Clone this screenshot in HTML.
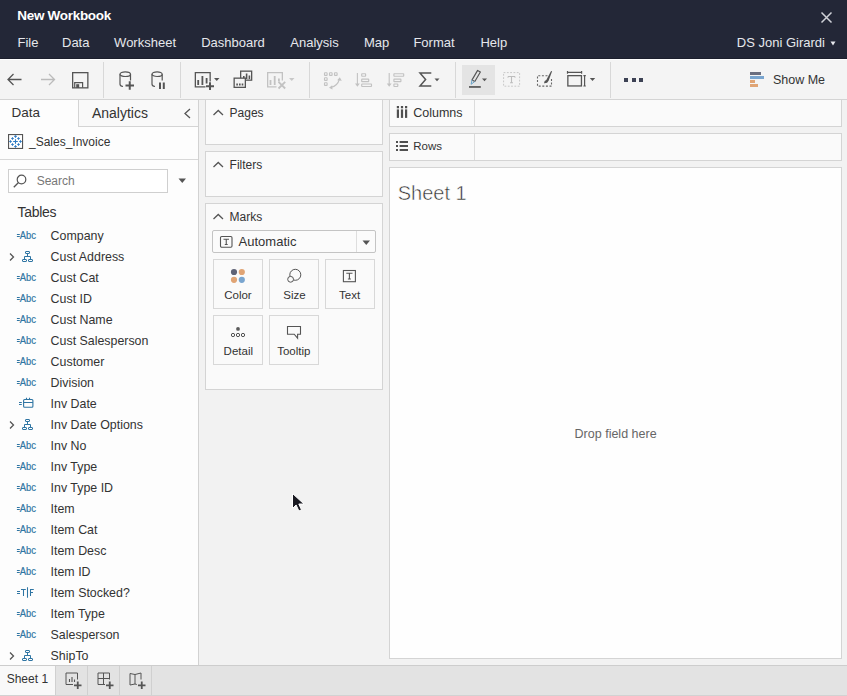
<!DOCTYPE html>
<html><head><meta charset="utf-8"><style>
html,body{margin:0;padding:0;width:847px;height:696px;overflow:hidden;background:#f2f2f2;position:relative}
body{font-family:"Liberation Sans",sans-serif}
.t{position:absolute;line-height:1;white-space:nowrap}
svg{overflow:visible}
</style></head><body>
<div style="position:absolute;left:0px;top:0px;width:847px;height:58px;background:#232737"></div>
<div style="position:absolute;left:0px;top:58px;width:847px;height:1px;background:#1c1f2d"></div>
<div style="position:absolute;left:0px;top:59px;width:847px;height:1px;background:#ffffff"></div>
<div class="t" style="left:17.3px;top:9.07px;font-size:13.5px;color:#ffffff;font-weight:bold;letter-spacing:-0.3px">New Workbook</div>
<svg style="position:absolute;left:819px;top:10px" width="15" height="15" viewBox="0 0 15 15"><path d="M2.5 2.5L12.5 12.5M12.5 2.5L2.5 12.5" stroke="#d0d2d8" stroke-width="1.5" fill="none"/></svg>
<div class="t" style="left:17.5px;top:35.70px;font-size:13px;color:#e6e7ec;font-weight:normal;">File</div>
<div class="t" style="left:62.0px;top:35.70px;font-size:13px;color:#e6e7ec;font-weight:normal;">Data</div>
<div class="t" style="left:114.1px;top:35.70px;font-size:13px;color:#e6e7ec;font-weight:normal;">Worksheet</div>
<div class="t" style="left:201.2px;top:35.70px;font-size:13px;color:#e6e7ec;font-weight:normal;">Dashboard</div>
<div class="t" style="left:290.3px;top:35.70px;font-size:13px;color:#e6e7ec;font-weight:normal;">Analysis</div>
<div class="t" style="left:363.9px;top:35.70px;font-size:13px;color:#e6e7ec;font-weight:normal;">Map</div>
<div class="t" style="left:413.4px;top:35.70px;font-size:13px;color:#e6e7ec;font-weight:normal;">Format</div>
<div class="t" style="left:480.4px;top:35.70px;font-size:13px;color:#e6e7ec;font-weight:normal;">Help</div>
<div class="t" style="left:736.8px;top:35.80px;font-size:13px;color:#e6e7ec;font-weight:normal;">DS Joni Girardi</div>
<svg style="position:absolute;left:830px;top:41px" width="6" height="5" viewBox="0 0 6 5"><path d="M0.5 0.5H5.5L3 4.5Z" fill="#e6e7ec"/></svg>
<div style="position:absolute;left:0px;top:60px;width:847px;height:39px;background:#f4f4f4"></div>
<div style="position:absolute;left:0px;top:99px;width:847px;height:1px;background:#d4d4d4"></div>
<div style="position:absolute;left:103px;top:62px;width:1px;height:36px;background:#d8d8d8"></div>
<div style="position:absolute;left:180px;top:62px;width:1px;height:36px;background:#d8d8d8"></div>
<div style="position:absolute;left:309px;top:62px;width:1px;height:36px;background:#d8d8d8"></div>
<div style="position:absolute;left:455px;top:62px;width:1px;height:36px;background:#d8d8d8"></div>
<div style="position:absolute;left:610px;top:62px;width:1px;height:36px;background:#d8d8d8"></div>
<svg style="position:absolute;left:6px;top:72px" width="18" height="15" viewBox="0 0 18 15"><path d="M15.5 7.5H2M7.5 2L2 7.5L7.5 13" stroke="#555" stroke-width="1.3" fill="none"/></svg>
<svg style="position:absolute;left:39px;top:72px" width="18" height="15" viewBox="0 0 18 15"><path d="M2 7.5H15.5M10 2L15.5 7.5L10 13" stroke="#bbb" stroke-width="1.3" fill="none"/></svg>
<svg style="position:absolute;left:72px;top:72px" width="17" height="17" viewBox="0 0 17 17"><rect x="0.65" y="0.65" width="15.2" height="15.2" fill="none" stroke="#555" stroke-width="1.3"/><path d="M2.7 15.8V10.6H10.6V15.8" fill="none" stroke="#555" stroke-width="1.2"/><rect x="4.2" y="12.2" width="3" height="3.8" fill="#555"/></svg>
<svg style="position:absolute;left:118.8px;top:71.3px" width="17" height="20" viewBox="0 0 17 20"><path d="M1 3.2V13.2Q1 15 4 15.5" fill="none" stroke="#555" stroke-width="1.2"/><path d="M11.5 3.2V9.5" fill="none" stroke="#555" stroke-width="1.2"/><ellipse cx="6.25" cy="3.2" rx="5.25" ry="2.3" fill="none" stroke="#555" stroke-width="1.2"/><path d="M6.5 14.5H15M10.75 10.2V18.7" stroke="#555" stroke-width="2"/></svg>
<svg style="position:absolute;left:150.6px;top:71.3px" width="16" height="20" viewBox="0 0 16 20"><path d="M1 3.2V13.2Q1 15 4 15.5" fill="none" stroke="#555" stroke-width="1.2"/><path d="M11.2 3.2V9.5" fill="none" stroke="#555" stroke-width="1.2"/><ellipse cx="6.1" cy="3.2" rx="5.1" ry="2.3" fill="none" stroke="#555" stroke-width="1.2"/><path d="M9 11.5V18M12.8 11.5V18" stroke="#555" stroke-width="2"/></svg>
<svg style="position:absolute;left:194px;top:71px" width="27" height="20" viewBox="0 0 27 20"><path d="M11.5 15.85H1.35V1.65H16.15V10.5" fill="none" stroke="#555" stroke-width="1.3"/><g fill="#555"><rect x="3.3" y="9" width="1.8" height="5"/><rect x="7.5" y="5" width="1.8" height="9"/><rect x="11.7" y="7" width="1.8" height="5.5"/></g><path d="M12 15.3H20M16 11.3V19" stroke="#555" stroke-width="2"/><path d="M20 7H25.5L22.75 10Z" fill="#555"/></svg>
<svg style="position:absolute;left:233px;top:70px" width="20" height="19" viewBox="0 0 20 19"><rect x="7.65" y="1.15" width="11" height="9" fill="#f4f4f4" stroke="#555" stroke-width="1.3"/><g fill="#555"><rect x="10" y="6" width="1.6" height="3"/><rect x="12.8" y="3.5" width="1.6" height="5.5"/><rect x="15.6" y="5.5" width="1.6" height="3.5"/></g><rect x="1.15" y="8.15" width="11.2" height="9.2" fill="#f4f4f4" stroke="#555" stroke-width="1.3"/><g fill="#555"><rect x="3.3" y="13.5" width="1.6" height="2"/><rect x="6" y="13.5" width="1.6" height="2"/><rect x="8.7" y="13.5" width="1.6" height="2"/></g></svg>
<svg style="position:absolute;left:266px;top:71px" width="30" height="20" viewBox="0 0 30 20"><path d="M10.5 15.85H1.65V1.65H16.35V9.5" fill="none" stroke="#c2c2c2" stroke-width="1.3"/><g fill="#c2c2c2"><rect x="3.6" y="9" width="1.8" height="5"/><rect x="7.8" y="5" width="1.8" height="9"/><rect x="12" y="7.5" width="1.8" height="3"/></g><path d="M12.5 10.8L19.2 17.5M19.2 10.8L12.5 17.5" stroke="#c2c2c2" stroke-width="1.8"/><path d="M23 7H28.5L25.75 10Z" fill="#c8c8c8"/></svg>
<svg style="position:absolute;left:322px;top:71px" width="21" height="19" viewBox="0 0 21 19"><g fill="none" stroke="#c2c2c2" stroke-width="1.1"><rect x="2.5" y="1.8" width="2.6" height="2.6" rx="0.5"/><rect x="7.5" y="1.8" width="2.6" height="2.6" rx="0.5"/><rect x="12.5" y="1.8" width="2.6" height="2.6" rx="0.5"/><rect x="2.5" y="6.8" width="2.6" height="2.6" rx="0.5"/><rect x="2.5" y="11.8" width="2.6" height="2.6" rx="0.5"/><path d="M9 16.3Q15.5 15 17.3 8.5"/></g><path d="M15.2 9.2L17.8 6.3L19.8 9.8Z M10.2 14.3L7 16.8L10.5 18.4Z" fill="#c2c2c2"/></svg>
<svg style="position:absolute;left:353px;top:71px" width="20" height="19" viewBox="0 0 20 19"><path d="M4.4 2V13" stroke="#c2c2c2" stroke-width="1.1"/><path d="M2 12.5H6.8L4.4 15.8Z" fill="#c2c2c2"/><g fill="none" stroke="#c2c2c2" stroke-width="1.15"><rect x="8.7" y="2.7" width="3.9" height="2.5" rx="0.4"/><rect x="8.7" y="8.1" width="7" height="2.5" rx="0.4"/><rect x="8.7" y="13" width="9.8" height="2.5" rx="0.4"/></g></svg>
<svg style="position:absolute;left:386px;top:71px" width="20" height="19" viewBox="0 0 20 19"><path d="M3.2 2V13" stroke="#c2c2c2" stroke-width="1.1"/><path d="M0.8 12.5H5.6L3.2 15.8Z" fill="#c2c2c2"/><g fill="none" stroke="#c2c2c2" stroke-width="1.15"><rect x="7.9" y="2.7" width="9.8" height="2.5" rx="0.4"/><rect x="7.9" y="8.1" width="7" height="2.5" rx="0.4"/><rect x="7.9" y="13" width="3.9" height="2.5" rx="0.4"/></g></svg>
<svg style="position:absolute;left:418px;top:71px" width="24" height="17" viewBox="0 0 24 17"><path d="M13.3 2H2L7.6 8.4L2 15H13.3" fill="none" stroke="#555" stroke-width="1.5" stroke-linejoin="miter"/><path d="M16.5 7.5H21.5L19 10.3Z" fill="#555"/></svg>
<div style="position:absolute;left:462px;top:65px;width:33px;height:30px;background:#e4e4e4"></div>
<svg style="position:absolute;left:466px;top:69px" width="24" height="20" viewBox="0 0 24 20"><path d="M11.62 1.39L14.38 3.01L8.81 12.5L6.05 10.88Z" fill="none" stroke="#555" stroke-width="1.15" stroke-linejoin="round"/><path d="M6.05 10.88L5.1 15.3L8.81 12.5" fill="none" stroke="#6aa3c8" stroke-width="1"/><rect x="3" y="17.1" width="11.8" height="1.7" fill="#555"/><path d="M16 9.5H21L18.5 12.2Z" fill="#555"/></svg>
<svg style="position:absolute;left:503px;top:72px" width="18" height="16" viewBox="0 0 18 16"><rect x="0.6" y="0.6" width="16" height="13.6" fill="none" stroke="#c8c8c8" stroke-width="1" stroke-dasharray="1.8 1.5"/><path d="M5 4.5H12M8.5 4.5V10.8M7 10.8H10" stroke="#bdbdbd" stroke-width="1.1" fill="none"/><path d="M5 4.5V5.8M12 4.5V5.8" stroke="#bdbdbd" stroke-width="0.9"/></svg>
<svg style="position:absolute;left:536px;top:69px" width="18" height="19" viewBox="0 0 18 19"><path d="M11.5 6.7H1.5V17.1H15.5V9.5" fill="none" stroke="#666" stroke-width="1.1" stroke-dasharray="2 1.6"/><path d="M8 14.2Q8.2 11.5 10.3 11L14.8 2.6Q15.6 1.5 16.1 2.3L12.6 11.7Q11.5 14.5 8 14.2Z" fill="#555"/></svg>
<svg style="position:absolute;left:566px;top:69px" width="31" height="20" viewBox="0 0 31 20"><rect x="1.85" y="6.65" width="13.6" height="10.3" fill="none" stroke="#555" stroke-width="1.3"/><path d="M1.5 3.4H15.6M1.5 2V4.8M15.6 2V4.8" stroke="#555" stroke-width="1.2" fill="none"/><path d="M18.6 6V17.6M17.4 6.6H19.8M17.4 17H19.8" stroke="#555" stroke-width="1.2" fill="none"/><path d="M23.8 9H29.2L26.5 11.9Z" fill="#555"/></svg>
<div style="position:absolute;left:624px;top:78px;width:4px;height:4px;background:#3d4254"></div>
<div style="position:absolute;left:631.5px;top:78px;width:4px;height:4px;background:#3d4254"></div>
<div style="position:absolute;left:639px;top:78px;width:4px;height:4px;background:#3d4254"></div>
<div style="position:absolute;left:750px;top:72px;width:11px;height:3px;background:#6b6f80"></div>
<div style="position:absolute;left:750px;top:76px;width:14px;height:3px;background:#79a5cf"></div>
<div style="position:absolute;left:750px;top:80px;width:5px;height:3px;background:#e0a474"></div>
<div style="position:absolute;left:750px;top:84px;width:8px;height:3px;background:#e0a474"></div>
<div class="t" style="left:772.9px;top:73.72px;font-size:12.5px;color:#333;font-weight:normal;">Show Me</div>
<div style="position:absolute;left:0px;top:100px;width:847px;height:565px;background:#f2f2f2"></div>
<div style="position:absolute;left:0px;top:100px;width:198px;height:565px;background:#fdfdfd"></div>
<div style="position:absolute;left:198px;top:100px;width:1px;height:565px;background:#d2d2d2"></div>
<div style="position:absolute;left:78px;top:100px;width:120px;height:26px;background:#f9f9f9;border-left:1px solid #d4d4d4;border-bottom:1px solid #d4d4d4;box-sizing:border-box;width:120px;height:27px"></div>
<div class="t" style="left:11.5px;top:106.17px;font-size:13.5px;color:#333;font-weight:normal;">Data</div>
<div class="t" style="left:91.9px;top:106.15px;font-size:14px;color:#333;font-weight:normal;">Analytics</div>
<svg style="position:absolute;left:183px;top:108px" width="9" height="11" viewBox="0 0 9 11"><path d="M7 1L2 5.5L7 10" fill="none" stroke="#555" stroke-width="1.3"/></svg>
<svg style="position:absolute;left:8px;top:134px" width="16" height="16" viewBox="0 0 16 16"><rect x="0.55" y="0.55" width="14" height="13.9" fill="#fff" stroke="#555" stroke-width="1.1"/><g stroke="#2e7bc4" stroke-width="1.1"><path d="M6.25 2.40H8.75M7.50 1.15V3.65"/><path d="M6.25 12.50H8.75M7.50 11.25V13.75"/><path d="M1.25 7.50H3.75M2.50 6.25V8.75"/><path d="M11.25 7.50H13.75M12.50 6.25V8.75"/><path d="M3.25 4.50H5.75M4.50 3.25V5.75"/><path d="M9.25 4.50H11.75M10.50 3.25V5.75"/><path d="M3.25 10.50H5.75M4.50 9.25V11.75"/><path d="M9.25 10.50H11.75M10.50 9.25V11.75"/><path d="M5.2 7.5H9.8M7.5 5.2V9.8"/></g></svg>
<div class="t" style="left:29.0px;top:135.64px;font-size:12px;color:#333;font-weight:normal;">_Sales_Invoice</div>
<div style="position:absolute;left:0px;top:159px;width:198px;height:1px;background:#d8d8d8"></div>
<div style="position:absolute;left:8px;top:169px;width:160px;height:24px;background:#fff;border:1px solid #cfcfcf;box-sizing:border-box"></div>
<svg style="position:absolute;left:12px;top:174px" width="16" height="15" viewBox="0 0 16 15"><circle cx="9.5" cy="5.5" r="4.3" fill="none" stroke="#555" stroke-width="1.2"/><path d="M6.5 8.5L1.8 13.2" stroke="#555" stroke-width="1.3"/></svg>
<div class="t" style="left:36.7px;top:175.34px;font-size:12px;color:#777;font-weight:normal;">Search</div>
<svg style="position:absolute;left:178px;top:178px" width="9" height="6" viewBox="0 0 9 6"><path d="M0.5 0.5H8L4.25 5Z" fill="#555"/></svg>
<div class="t" style="left:17.4px;top:205.15px;font-size:14px;color:#333;font-weight:normal;letter-spacing:-0.25px">Tables</div>
<div class="t" style="left:50.6px;top:229.50px;font-size:12.4px;color:#333;font-weight:normal;">Company</div>
<svg style="position:absolute;left:16px;top:232px" width="22" height="9" viewBox="0 0 22 9"><path d="M0.9 2.5H3.8M0.9 4.5H3.8" stroke="#2f75a3" stroke-width="1"/><text x="3.8" y="7" font-family="Liberation Sans" font-size="10" font-weight="normal" fill="#2f75a3" stroke="#2f75a3" stroke-width="0.2" textLength="16.2" lengthAdjust="spacingAndGlyphs">Abc</text></svg>
<div class="t" style="left:50.6px;top:250.50px;font-size:12.4px;color:#333;font-weight:normal;">Cust Address</div>
<svg style="position:absolute;left:8px;top:252px" width="8" height="10" viewBox="0 0 8 10"><path d="M2 1.5L5.5 5L2 8.5" fill="none" stroke="#555" stroke-width="1.3"/></svg>
<svg style="position:absolute;left:21px;top:251px" width="13" height="13" viewBox="0 0 13 13"><g fill="none" stroke="#2f75a3" stroke-width="1"><rect x="4.5" y="0.5" width="4" height="2" rx="0.4"/><rect x="1.5" y="8.5" width="4" height="2" rx="0.4"/><rect x="7.5" y="8.5" width="4" height="2" rx="0.4"/><path d="M6.5 3V5.5M3.5 8V5.5H9.5V8"/></g></svg>
<div class="t" style="left:50.6px;top:271.50px;font-size:12.4px;color:#333;font-weight:normal;">Cust Cat</div>
<svg style="position:absolute;left:16px;top:274px" width="22" height="9" viewBox="0 0 22 9"><path d="M0.9 2.5H3.8M0.9 4.5H3.8" stroke="#2f75a3" stroke-width="1"/><text x="3.8" y="7" font-family="Liberation Sans" font-size="10" font-weight="normal" fill="#2f75a3" stroke="#2f75a3" stroke-width="0.2" textLength="16.2" lengthAdjust="spacingAndGlyphs">Abc</text></svg>
<div class="t" style="left:50.6px;top:292.50px;font-size:12.4px;color:#333;font-weight:normal;">Cust ID</div>
<svg style="position:absolute;left:16px;top:295px" width="22" height="9" viewBox="0 0 22 9"><path d="M0.9 2.5H3.8M0.9 4.5H3.8" stroke="#2f75a3" stroke-width="1"/><text x="3.8" y="7" font-family="Liberation Sans" font-size="10" font-weight="normal" fill="#2f75a3" stroke="#2f75a3" stroke-width="0.2" textLength="16.2" lengthAdjust="spacingAndGlyphs">Abc</text></svg>
<div class="t" style="left:50.6px;top:313.50px;font-size:12.4px;color:#333;font-weight:normal;">Cust Name</div>
<svg style="position:absolute;left:16px;top:316px" width="22" height="9" viewBox="0 0 22 9"><path d="M0.9 2.5H3.8M0.9 4.5H3.8" stroke="#2f75a3" stroke-width="1"/><text x="3.8" y="7" font-family="Liberation Sans" font-size="10" font-weight="normal" fill="#2f75a3" stroke="#2f75a3" stroke-width="0.2" textLength="16.2" lengthAdjust="spacingAndGlyphs">Abc</text></svg>
<div class="t" style="left:50.6px;top:334.50px;font-size:12.4px;color:#333;font-weight:normal;">Cust Salesperson</div>
<svg style="position:absolute;left:16px;top:337px" width="22" height="9" viewBox="0 0 22 9"><path d="M0.9 2.5H3.8M0.9 4.5H3.8" stroke="#2f75a3" stroke-width="1"/><text x="3.8" y="7" font-family="Liberation Sans" font-size="10" font-weight="normal" fill="#2f75a3" stroke="#2f75a3" stroke-width="0.2" textLength="16.2" lengthAdjust="spacingAndGlyphs">Abc</text></svg>
<div class="t" style="left:50.6px;top:355.50px;font-size:12.4px;color:#333;font-weight:normal;">Customer</div>
<svg style="position:absolute;left:16px;top:358px" width="22" height="9" viewBox="0 0 22 9"><path d="M0.9 2.5H3.8M0.9 4.5H3.8" stroke="#2f75a3" stroke-width="1"/><text x="3.8" y="7" font-family="Liberation Sans" font-size="10" font-weight="normal" fill="#2f75a3" stroke="#2f75a3" stroke-width="0.2" textLength="16.2" lengthAdjust="spacingAndGlyphs">Abc</text></svg>
<div class="t" style="left:50.6px;top:376.50px;font-size:12.4px;color:#333;font-weight:normal;">Division</div>
<svg style="position:absolute;left:16px;top:379px" width="22" height="9" viewBox="0 0 22 9"><path d="M0.9 2.5H3.8M0.9 4.5H3.8" stroke="#2f75a3" stroke-width="1"/><text x="3.8" y="7" font-family="Liberation Sans" font-size="10" font-weight="normal" fill="#2f75a3" stroke="#2f75a3" stroke-width="0.2" textLength="16.2" lengthAdjust="spacingAndGlyphs">Abc</text></svg>
<div class="t" style="left:50.6px;top:397.50px;font-size:12.4px;color:#333;font-weight:normal;">Inv Date</div>
<svg style="position:absolute;left:18px;top:397px" width="17" height="12" viewBox="0 0 17 12"><path d="M1 5.5H3.8M1 7.5H3.8" stroke="#2f75a3" stroke-width="1"/><rect x="5.6" y="2.5" width="9.3" height="7.8" rx="1" fill="none" stroke="#2f75a3" stroke-width="1.1"/><path d="M5.6 5.5H14.9M8.5 0.8V3M11.5 0.8V3" stroke="#2f75a3" stroke-width="1.1"/></svg>
<div class="t" style="left:50.6px;top:418.50px;font-size:12.4px;color:#333;font-weight:normal;">Inv Date Options</div>
<svg style="position:absolute;left:8px;top:420px" width="8" height="10" viewBox="0 0 8 10"><path d="M2 1.5L5.5 5L2 8.5" fill="none" stroke="#555" stroke-width="1.3"/></svg>
<svg style="position:absolute;left:21px;top:419px" width="13" height="13" viewBox="0 0 13 13"><g fill="none" stroke="#2f75a3" stroke-width="1"><rect x="4.5" y="0.5" width="4" height="2" rx="0.4"/><rect x="1.5" y="8.5" width="4" height="2" rx="0.4"/><rect x="7.5" y="8.5" width="4" height="2" rx="0.4"/><path d="M6.5 3V5.5M3.5 8V5.5H9.5V8"/></g></svg>
<div class="t" style="left:50.6px;top:439.50px;font-size:12.4px;color:#333;font-weight:normal;">Inv No</div>
<svg style="position:absolute;left:16px;top:442px" width="22" height="9" viewBox="0 0 22 9"><path d="M0.9 2.5H3.8M0.9 4.5H3.8" stroke="#2f75a3" stroke-width="1"/><text x="3.8" y="7" font-family="Liberation Sans" font-size="10" font-weight="normal" fill="#2f75a3" stroke="#2f75a3" stroke-width="0.2" textLength="16.2" lengthAdjust="spacingAndGlyphs">Abc</text></svg>
<div class="t" style="left:50.6px;top:460.50px;font-size:12.4px;color:#333;font-weight:normal;">Inv Type</div>
<svg style="position:absolute;left:16px;top:463px" width="22" height="9" viewBox="0 0 22 9"><path d="M0.9 2.5H3.8M0.9 4.5H3.8" stroke="#2f75a3" stroke-width="1"/><text x="3.8" y="7" font-family="Liberation Sans" font-size="10" font-weight="normal" fill="#2f75a3" stroke="#2f75a3" stroke-width="0.2" textLength="16.2" lengthAdjust="spacingAndGlyphs">Abc</text></svg>
<div class="t" style="left:50.6px;top:481.50px;font-size:12.4px;color:#333;font-weight:normal;">Inv Type ID</div>
<svg style="position:absolute;left:16px;top:484px" width="22" height="9" viewBox="0 0 22 9"><path d="M0.9 2.5H3.8M0.9 4.5H3.8" stroke="#2f75a3" stroke-width="1"/><text x="3.8" y="7" font-family="Liberation Sans" font-size="10" font-weight="normal" fill="#2f75a3" stroke="#2f75a3" stroke-width="0.2" textLength="16.2" lengthAdjust="spacingAndGlyphs">Abc</text></svg>
<div class="t" style="left:50.6px;top:502.50px;font-size:12.4px;color:#333;font-weight:normal;">Item</div>
<svg style="position:absolute;left:16px;top:505px" width="22" height="9" viewBox="0 0 22 9"><path d="M0.9 2.5H3.8M0.9 4.5H3.8" stroke="#2f75a3" stroke-width="1"/><text x="3.8" y="7" font-family="Liberation Sans" font-size="10" font-weight="normal" fill="#2f75a3" stroke="#2f75a3" stroke-width="0.2" textLength="16.2" lengthAdjust="spacingAndGlyphs">Abc</text></svg>
<div class="t" style="left:50.6px;top:523.50px;font-size:12.4px;color:#333;font-weight:normal;">Item Cat</div>
<svg style="position:absolute;left:16px;top:526px" width="22" height="9" viewBox="0 0 22 9"><path d="M0.9 2.5H3.8M0.9 4.5H3.8" stroke="#2f75a3" stroke-width="1"/><text x="3.8" y="7" font-family="Liberation Sans" font-size="10" font-weight="normal" fill="#2f75a3" stroke="#2f75a3" stroke-width="0.2" textLength="16.2" lengthAdjust="spacingAndGlyphs">Abc</text></svg>
<div class="t" style="left:50.6px;top:544.50px;font-size:12.4px;color:#333;font-weight:normal;">Item Desc</div>
<svg style="position:absolute;left:16px;top:547px" width="22" height="9" viewBox="0 0 22 9"><path d="M0.9 2.5H3.8M0.9 4.5H3.8" stroke="#2f75a3" stroke-width="1"/><text x="3.8" y="7" font-family="Liberation Sans" font-size="10" font-weight="normal" fill="#2f75a3" stroke="#2f75a3" stroke-width="0.2" textLength="16.2" lengthAdjust="spacingAndGlyphs">Abc</text></svg>
<div class="t" style="left:50.6px;top:565.50px;font-size:12.4px;color:#333;font-weight:normal;">Item ID</div>
<svg style="position:absolute;left:16px;top:568px" width="22" height="9" viewBox="0 0 22 9"><path d="M0.9 2.5H3.8M0.9 4.5H3.8" stroke="#2f75a3" stroke-width="1"/><text x="3.8" y="7" font-family="Liberation Sans" font-size="10" font-weight="normal" fill="#2f75a3" stroke="#2f75a3" stroke-width="0.2" textLength="16.2" lengthAdjust="spacingAndGlyphs">Abc</text></svg>
<div class="t" style="left:50.6px;top:586.50px;font-size:12.4px;color:#333;font-weight:normal;">Item Stocked?</div>
<svg style="position:absolute;left:16px;top:586px" width="20" height="13" viewBox="0 0 20 13"><path d="M1 5.5H4M1 7.5H4" stroke="#2f75a3" stroke-width="1"/><path d="M5 3.5H9.8M7.5 3.5V10M11.5 1.2V11.7M14.5 3V10M14.5 3.5H17.8M14.5 6.5H17" stroke="#2f75a3" stroke-width="1.05" fill="none"/></svg>
<div class="t" style="left:50.6px;top:607.50px;font-size:12.4px;color:#333;font-weight:normal;">Item Type</div>
<svg style="position:absolute;left:16px;top:610px" width="22" height="9" viewBox="0 0 22 9"><path d="M0.9 2.5H3.8M0.9 4.5H3.8" stroke="#2f75a3" stroke-width="1"/><text x="3.8" y="7" font-family="Liberation Sans" font-size="10" font-weight="normal" fill="#2f75a3" stroke="#2f75a3" stroke-width="0.2" textLength="16.2" lengthAdjust="spacingAndGlyphs">Abc</text></svg>
<div class="t" style="left:50.6px;top:628.50px;font-size:12.4px;color:#333;font-weight:normal;">Salesperson</div>
<svg style="position:absolute;left:16px;top:631px" width="22" height="9" viewBox="0 0 22 9"><path d="M0.9 2.5H3.8M0.9 4.5H3.8" stroke="#2f75a3" stroke-width="1"/><text x="3.8" y="7" font-family="Liberation Sans" font-size="10" font-weight="normal" fill="#2f75a3" stroke="#2f75a3" stroke-width="0.2" textLength="16.2" lengthAdjust="spacingAndGlyphs">Abc</text></svg>
<div class="t" style="left:50.6px;top:649.50px;font-size:12.4px;color:#333;font-weight:normal;">ShipTo</div>
<svg style="position:absolute;left:8px;top:651px" width="8" height="10" viewBox="0 0 8 10"><path d="M2 1.5L5.5 5L2 8.5" fill="none" stroke="#555" stroke-width="1.3"/></svg>
<svg style="position:absolute;left:21px;top:650px" width="13" height="13" viewBox="0 0 13 13"><g fill="none" stroke="#2f75a3" stroke-width="1"><rect x="4.5" y="0.5" width="4" height="2" rx="0.4"/><rect x="1.5" y="8.5" width="4" height="2" rx="0.4"/><rect x="7.5" y="8.5" width="4" height="2" rx="0.4"/><path d="M6.5 3V5.5M3.5 8V5.5H9.5V8"/></g></svg>
<div style="position:absolute;left:205px;top:99px;width:178px;height:46px;background:#fafafa;border:1px solid #d4d4d4;box-sizing:border-box"></div>
<div style="position:absolute;left:205px;top:151px;width:178px;height:46px;background:#fafafa;border:1px solid #d4d4d4;box-sizing:border-box"></div>
<div style="position:absolute;left:205px;top:203px;width:178px;height:187px;background:#fafafa;border:1px solid #d4d4d4;box-sizing:border-box"></div>
<svg style="position:absolute;left:212px;top:109.3px" width="13" height="7" viewBox="0 0 13 7"><path d="M1.5 6L6.25 1.5L11 6" fill="none" stroke="#555" stroke-width="1.3"/></svg>
<div class="t" style="left:229.6px;top:107.14px;font-size:12px;color:#333;font-weight:normal;">Pages</div>
<svg style="position:absolute;left:212px;top:161.3px" width="13" height="7" viewBox="0 0 13 7"><path d="M1.5 6L6.25 1.5L11 6" fill="none" stroke="#555" stroke-width="1.3"/></svg>
<div class="t" style="left:229.6px;top:159.14px;font-size:12px;color:#333;font-weight:normal;">Filters</div>
<svg style="position:absolute;left:212px;top:213.3px" width="13" height="7" viewBox="0 0 13 7"><path d="M1.5 6L6.25 1.5L11 6" fill="none" stroke="#555" stroke-width="1.3"/></svg>
<div class="t" style="left:229.6px;top:211.14px;font-size:12px;color:#333;font-weight:normal;">Marks</div>
<div style="position:absolute;left:212px;top:230px;width:164px;height:23px;background:#fbfbfb;border:1px solid #c4c4c4;border-radius:2px;box-sizing:border-box"></div>
<div style="position:absolute;left:356px;top:231px;width:1px;height:21px;background:#dedede"></div>
<svg style="position:absolute;left:219px;top:235px" width="15" height="13" viewBox="0 0 15 13"><rect x="1.5" y="1.5" width="11.5" height="10.8" rx="1.2" fill="none" stroke="#555" stroke-width="1.1"/><path d="M4.5 4.2H10M7.25 4.2V9.5M5.8 9.5H8.7" stroke="#555" stroke-width="1.1" fill="none"/></svg>
<div class="t" style="left:238.6px;top:235.30px;font-size:13px;color:#333;font-weight:normal;">Automatic</div>
<svg style="position:absolute;left:362px;top:240px" width="9" height="6" viewBox="0 0 9 6"><path d="M0.5 0.5H8L4.25 5Z" fill="#555"/></svg>
<div style="position:absolute;left:213px;top:259px;width:50px;height:50px;background:#fafafa;border:1px solid #d8d8d8;box-sizing:border-box"></div>
<svg style="position:absolute;left:230px;top:268px" width="16" height="16"><circle cx="4" cy="4" r="3.1" fill="#5e6275"/><circle cx="11.8" cy="4" r="3.1" fill="#e0a474"/><circle cx="4" cy="11.8" r="3.1" fill="#e0a474"/><circle cx="11.8" cy="11.8" r="3.1" fill="#79a5cf"/></svg>
<div class="t" style="left:224.2px;top:290.07px;font-size:11.5px;color:#333;font-weight:normal;">Color</div>
<div style="position:absolute;left:269px;top:259px;width:50px;height:50px;background:#fafafa;border:1px solid #d8d8d8;box-sizing:border-box"></div>
<svg style="position:absolute;left:286px;top:268px" width="17" height="16"><circle cx="9.3" cy="6.8" r="5.5" fill="none" stroke="#555" stroke-width="1"/><circle cx="4.6" cy="11.3" r="2.9" fill="#fafafa" stroke="#555" stroke-width="1"/></svg>
<div class="t" style="left:283.3px;top:290.07px;font-size:11.5px;color:#333;font-weight:normal;">Size</div>
<div style="position:absolute;left:325px;top:259px;width:50px;height:50px;background:#fafafa;border:1px solid #d8d8d8;box-sizing:border-box"></div>
<svg style="position:absolute;left:342px;top:269px" width="15" height="14"><rect x="1.4" y="1.5" width="12" height="11.2" fill="none" stroke="#555" stroke-width="1.1"/><path d="M4.3 4.3H10.5M7.4 4.3V10M5.9 10H8.9" stroke="#555" stroke-width="1.1" fill="none"/></svg>
<div class="t" style="left:339.0px;top:290.07px;font-size:11.5px;color:#333;font-weight:normal;">Text</div>
<div style="position:absolute;left:213px;top:315px;width:50px;height:50px;background:#fafafa;border:1px solid #d8d8d8;box-sizing:border-box"></div>
<svg style="position:absolute;left:230px;top:325px" width="16" height="12"><circle cx="8" cy="3.9" r="1.9" fill="#5a5a5a"/><circle cx="3" cy="10" r="1.65" fill="none" stroke="#555" stroke-width="1"/><circle cx="8" cy="10" r="1.65" fill="none" stroke="#555" stroke-width="1"/><circle cx="13" cy="10" r="1.65" fill="none" stroke="#555" stroke-width="1"/></svg>
<div class="t" style="left:223.6px;top:346.07px;font-size:11.5px;color:#333;font-weight:normal;">Detail</div>
<div style="position:absolute;left:269px;top:315px;width:50px;height:50px;background:#fafafa;border:1px solid #d8d8d8;box-sizing:border-box"></div>
<svg style="position:absolute;left:286px;top:325px" width="16" height="15"><path d="M1.5 1.5H14.5V9.2H11.6V13.2L8.2 9.2H1.5Z" fill="none" stroke="#555" stroke-width="1.1" stroke-linejoin="miter"/></svg>
<div class="t" style="left:277.2px;top:346.07px;font-size:11.5px;color:#333;font-weight:normal;">Tooltip</div>
<div style="position:absolute;left:389px;top:99px;width:453px;height:28px;background:#fafafa;border:1px solid #d4d4d4;box-sizing:border-box"></div>
<div style="position:absolute;left:474px;top:100px;width:1px;height:26px;background:#dcdcdc"></div>
<div style="position:absolute;left:389px;top:133px;width:453px;height:28px;background:#fafafa;border:1px solid #d4d4d4;box-sizing:border-box"></div>
<div style="position:absolute;left:474px;top:134px;width:1px;height:26px;background:#dcdcdc"></div>
<svg style="position:absolute;left:396px;top:106px" width="13" height="13" viewBox="0 0 13 13"><g fill="#505050"><rect x="0.8" y="0" width="2.2" height="2.3"/><rect x="4.9" y="0" width="2.2" height="2.3"/><rect x="9" y="0" width="2.2" height="2.3"/><rect x="0.8" y="3.4" width="2.2" height="8.5"/><rect x="4.9" y="3.4" width="2.2" height="8.5"/><rect x="9" y="3.4" width="2.2" height="8.5"/></g></svg>
<div class="t" style="left:413.2px;top:107.02px;font-size:12.5px;color:#333;font-weight:normal;">Columns</div>
<svg style="position:absolute;left:395px;top:140px" width="14" height="12" viewBox="0 0 14 12"><g fill="#505050"><rect x="1" y="1" width="2" height="2"/><rect x="1" y="5" width="2" height="2"/><rect x="1" y="9" width="2" height="2"/><rect x="4.6" y="1" width="8.4" height="2"/><rect x="4.6" y="5" width="8.4" height="2"/><rect x="4.6" y="9" width="8.4" height="2"/></g></svg>
<div class="t" style="left:413.2px;top:141.07px;font-size:11.5px;color:#333;font-weight:normal;">Rows</div>
<div style="position:absolute;left:389px;top:167px;width:453px;height:492px;background:#fefefe;border:1px solid #d4d4d4;box-sizing:border-box"></div>
<div class="t" style="left:397.7px;top:183.27px;font-size:20px;color:#333;font-weight:normal;-webkit-text-stroke:0.5px #fefefe">Sheet 1</div>
<div class="t" style="left:574.6px;top:427.72px;font-size:12.5px;color:#666;font-weight:normal;">Drop field here</div>
<div style="position:absolute;left:0px;top:665px;width:847px;height:1px;background:#cdcdcd"></div>
<div style="position:absolute;left:0px;top:666px;width:847px;height:29px;background:#e3e3e3"></div>
<div style="position:absolute;left:0px;top:695px;width:847px;height:1px;background:#d2d2d2"></div>
<div style="position:absolute;left:0px;top:666px;width:55px;height:29px;background:#f9f9f9"></div>
<div style="position:absolute;left:55px;top:666px;width:1px;height:29px;background:#d0d0d0"></div>
<div style="position:absolute;left:87px;top:666px;width:1px;height:29px;background:#d0d0d0"></div>
<div style="position:absolute;left:119px;top:666px;width:1px;height:29px;background:#d0d0d0"></div>
<div style="position:absolute;left:151px;top:666px;width:1px;height:29px;background:#d0d0d0"></div>
<div class="t" style="left:6.7px;top:673.04px;font-size:12px;color:#333;font-weight:normal;">Sheet 1</div>
<svg style="position:absolute;left:64.5px;top:671.5px" width="18" height="18" viewBox="0 0 18 18"><path d="M8 12.5H1V1H12.5V7.5" fill="none" stroke="#555" stroke-width="1"/><path d="M4.5 10V7M7 10V5M9.5 10V7.5" stroke="#555" stroke-width="1.1"/><path d="M9 13.3H16.5M12.75 9.5V17" stroke="#555" stroke-width="1.8"/></svg>
<svg style="position:absolute;left:96.5px;top:671.5px" width="18" height="18" viewBox="0 0 18 18"><path d="M8 12.5H1V1H12.5V7.5M1 6.5H12.5M6.5 1V12.5" fill="none" stroke="#555" stroke-width="1"/><path d="M9 13.3H16.5M12.75 9.5V17" stroke="#555" stroke-width="1.8"/></svg>
<svg style="position:absolute;left:128.5px;top:671.5px" width="18" height="18" viewBox="0 0 18 18"><path d="M1 1.5L6 2.5L12 1V7.5M7.8 12.5L6 12L1 13V1.5M6 2.5V12" fill="none" stroke="#555" stroke-width="1"/><path d="M9 13.3H16.5M12.75 9.5V17" stroke="#555" stroke-width="1.8"/></svg>
<svg style="position:absolute;left:291px;top:492px" width="14" height="20" viewBox="0 0 14 20"><path d="M1.5 1.5V16.5L5.1 13L7.9 19L10.5 17.8L7.8 12H13Z" fill="#1a1a22" stroke="#fff" stroke-width="1"/></svg>
</body></html>
